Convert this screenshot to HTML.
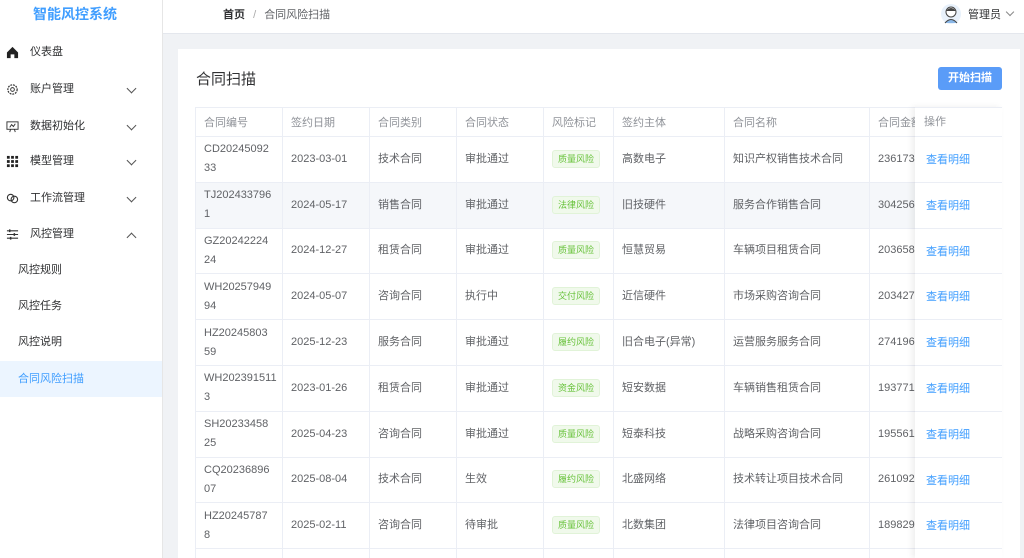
<!DOCTYPE html>
<html style="width:1024px;height:558px;overflow:hidden"><head><meta charset="utf-8"><style>
*{box-sizing:border-box;margin:0;padding:0}
body{width:1024px;height:558px;overflow:hidden;font-family:"Liberation Sans","Noto Sans CJK SC",sans-serif;background:#f0f2f5;position:relative;color:#606266}
.side{position:absolute;left:0;top:0;width:163px;height:558px;background:#fff;border-right:1px solid #e6e6e6}
.logo{position:absolute;left:0;width:150px;top:4px;text-align:center;color:#409eff;font-size:14px;font-weight:bold}
.mi{position:absolute;left:0;width:162px;height:36px;line-height:36px;font-size:11px;color:#303133}
.mi .ic{position:absolute;left:6px;top:12px;width:13px;height:13px}
.mi .t{position:absolute;left:30px}
.mi .ar{position:absolute;left:128px;top:14px;width:7px;height:7px;border-right:1px solid #555;border-bottom:1px solid #555;transform:rotate(45deg)}
.mi .up{transform:rotate(-135deg);top:18px}
.sub .t{left:18px}
.act{background:#ecf5ff;color:#409eff}
.hdr{position:absolute;left:163px;top:0;right:0;height:34px;background:#fff;border-bottom:1px solid #e4e7ed}
.card{position:absolute;left:178px;top:49px;width:842px;height:509px;background:#fff}
.btn{position:absolute;left:938px;top:67px;width:64px;height:23px;background:#5a9cf8;color:#fff;border-radius:3px;font-size:11px;text-align:center;line-height:23px;font-weight:bold}
.tw{position:absolute;left:195px;top:107px;width:720px;height:451px;overflow:hidden}
table{border-collapse:collapse;table-layout:fixed;font-size:11px;width:807px}
td,th{border:1px solid #ebeef5;padding:0 8px;text-align:left;font-weight:normal;white-space:nowrap;overflow:hidden}
th{height:29px;color:#909399}
td{height:45.8px;color:#606266;line-height:19px}
tr.g td{background:#f5f7fa}
.tag{display:inline-block;background:#f0f9eb;border:1px solid #e1f3d8;color:#67c23a;font-size:9px;padding:0 5px;height:18px;line-height:16px;border-radius:3px}
.op{position:absolute;left:915px;top:107px;width:87px;height:451px;background:#fff;box-shadow:-3px 0 6px rgba(0,0,0,.07);border-top:1px solid #ebeef5;overflow:hidden}
.op div{height:45.8px;line-height:46px;padding-left:11px;color:#409eff;font-size:11px;border-bottom:1px solid #ebeef5}
.op .h{height:29px;line-height:28px;color:#909399;padding-left:9px}
</style></head><body>
<div class="side">
<div class="logo">智能风控系统</div>
<div class="mi" style="top:34px"><svg class="ic" viewBox="0 0 14 14"><path d="M1 7L7 1L13 7V13H9V9H5V13H1Z" fill="#222"/></svg><span class="t">仪表盘</span></div>
<div class="mi" style="top:71px"><svg class="ic" viewBox="0 0 14 14"><circle cx="7" cy="7" r="5" fill="none" stroke="#333" stroke-width="1.3" stroke-dasharray="2 1"/><circle cx="7" cy="7" r="2" fill="none" stroke="#333"/></svg><span class="t">账户管理</span><i class="ar"></i></div>
<div class="mi" style="top:108px"><svg class="ic" viewBox="0 0 14 14"><rect x="1" y="2" width="12" height="8" fill="none" stroke="#333"/><path d="M4 8L6 5L8 7L10 4M5 10L4 13M9 10L10 13" stroke="#333" fill="none"/></svg><span class="t">数据初始化</span><i class="ar"></i></div>
<div class="mi" style="top:143px"><svg class="ic" viewBox="0 0 14 14" fill="#222"><rect x="1" y="1" width="3" height="3"/><rect x="5.5" y="1" width="3" height="3"/><rect x="10" y="1" width="3" height="3"/><rect x="1" y="5.5" width="3" height="3"/><rect x="5.5" y="5.5" width="3" height="3"/><rect x="10" y="5.5" width="3" height="3"/><rect x="1" y="10" width="3" height="3"/><rect x="5.5" y="10" width="3" height="3"/><rect x="10" y="10" width="3" height="3"/></svg><span class="t">模型管理</span><i class="ar"></i></div>
<div class="mi" style="top:180px"><svg class="ic" viewBox="0 0 14 14"><circle cx="5" cy="6" r="3.5" fill="none" stroke="#333" stroke-width="1.2"/><circle cx="9" cy="8" r="3.5" fill="none" stroke="#333" stroke-width="1.2"/></svg><span class="t">工作流管理</span><i class="ar"></i></div>
<div class="mi" style="top:216px"><svg class="ic" viewBox="0 0 14 14" stroke="#333" stroke-width="1.2"><path d="M1 3H13M1 7H13M1 11H13"/><path d="M4 1.5V4.5M9 5.5V8.5M5 9.5V12.5" stroke-width="1.6"/></svg><span class="t">风控管理</span><i class="ar up"></i></div>
<div class="mi sub" style="top:252px"><span class="t">风控规则</span></div>
<div class="mi sub" style="top:288px"><span class="t">风控任务</span></div>
<div class="mi sub" style="top:324px"><span class="t">风控说明</span></div>
<div class="mi sub act" style="top:361px"><span class="t">合同风险扫描</span></div>
</div>
<div class="hdr">
<div style="position:absolute;left:60px;top:6px;font-size:11px;color:#303133"><b>首页</b> <span style="color:#aaa;margin:0 5px">/</span> <span style="color:#606266">合同风险扫描</span></div>
<svg style="position:absolute;left:777px;top:3px" width="22" height="22" viewBox="0 0 22 22"><circle cx="11" cy="11" r="10" fill="#e8f1fb"/><circle cx="11" cy="9" r="5" fill="#fff" stroke="#444"/><path d="M6 8Q11 2 16 8" fill="#444"/><path d="M5 20Q11 13 17 20" fill="#8bb8e8" stroke="#444"/></svg>
<div style="position:absolute;left:805px;top:6px;font-size:11px;color:#303133">管理员</div>
<i style="position:absolute;left:844px;top:9px;width:6px;height:6px;border-right:1px solid #888;border-bottom:1px solid #888;transform:rotate(45deg)"></i>
</div>
<div class="card"></div>
<div style="position:absolute;left:196px;top:68px;font-size:15px;color:#303133">合同扫描</div>
<div class="btn">开始扫描</div>
<div class="tw"><table>
<colgroup><col style="width:87px"><col style="width:87px"><col style="width:87px"><col style="width:87px"><col style="width:70px"><col style="width:111px"><col style="width:145px"><col style="width:133px"></colgroup>
<tr><th>合同编号</th><th>签约日期</th><th>合同类别</th><th>合同状态</th><th>风险标记</th><th>签约主体</th><th>合同名称</th><th>合同金额</th></tr>
<tr><td>CD20245092<br>33</td><td>2023-03-01</td><td>技术合同</td><td>审批通过</td><td><span class="tag">质量风险</span></td><td>高数电子</td><td>知识产权销售技术合同</td><td>2361730</td></tr>
<tr class="g"><td>TJ202433796<br>1</td><td>2024-05-17</td><td>销售合同</td><td>审批通过</td><td><span class="tag">法律风险</span></td><td>旧技硬件</td><td>服务合作销售合同</td><td>3042560</td></tr>
<tr><td>GZ20242224<br>24</td><td>2024-12-27</td><td>租赁合同</td><td>审批通过</td><td><span class="tag">质量风险</span></td><td>恒慧贸易</td><td>车辆项目租赁合同</td><td>2036580</td></tr>
<tr><td>WH20257949<br>94</td><td>2024-05-07</td><td>咨询合同</td><td>执行中</td><td><span class="tag">交付风险</span></td><td>近信硬件</td><td>市场采购咨询合同</td><td>2034270</td></tr>
<tr><td>HZ20245803<br>59</td><td>2025-12-23</td><td>服务合同</td><td>审批通过</td><td><span class="tag">履约风险</span></td><td>旧合电子(异常)</td><td>运营服务服务合同</td><td>2741963</td></tr>
<tr><td>WH202391511<br>3</td><td>2023-01-26</td><td>租赁合同</td><td>审批通过</td><td><span class="tag">资金风险</span></td><td>短安数据</td><td>车辆销售租赁合同</td><td>1937712</td></tr>
<tr><td>SH20233458<br>25</td><td>2025-04-23</td><td>咨询合同</td><td>审批通过</td><td><span class="tag">质量风险</span></td><td>短泰科技</td><td>战略采购咨询合同</td><td>1955617</td></tr>
<tr><td>CQ20236896<br>07</td><td>2025-08-04</td><td>技术合同</td><td>生效</td><td><span class="tag">履约风险</span></td><td>北盛网络</td><td>技术转让项目技术合同</td><td>2610920</td></tr>
<tr><td>HZ20245787<br>8</td><td>2025-02-11</td><td>咨询合同</td><td>待审批</td><td><span class="tag">质量风险</span></td><td>北数集团</td><td>法律项目咨询合同</td><td>1898290</td></tr>
<tr><td></td><td></td><td></td><td></td><td></td><td></td><td></td><td></td></tr>
</table></div>
<div class="op"><div class="h">操作</div><div>查看明细</div><div>查看明细</div><div>查看明细</div><div>查看明细</div><div>查看明细</div><div>查看明细</div><div>查看明细</div><div>查看明细</div><div>查看明细</div></div>
</body></html>
